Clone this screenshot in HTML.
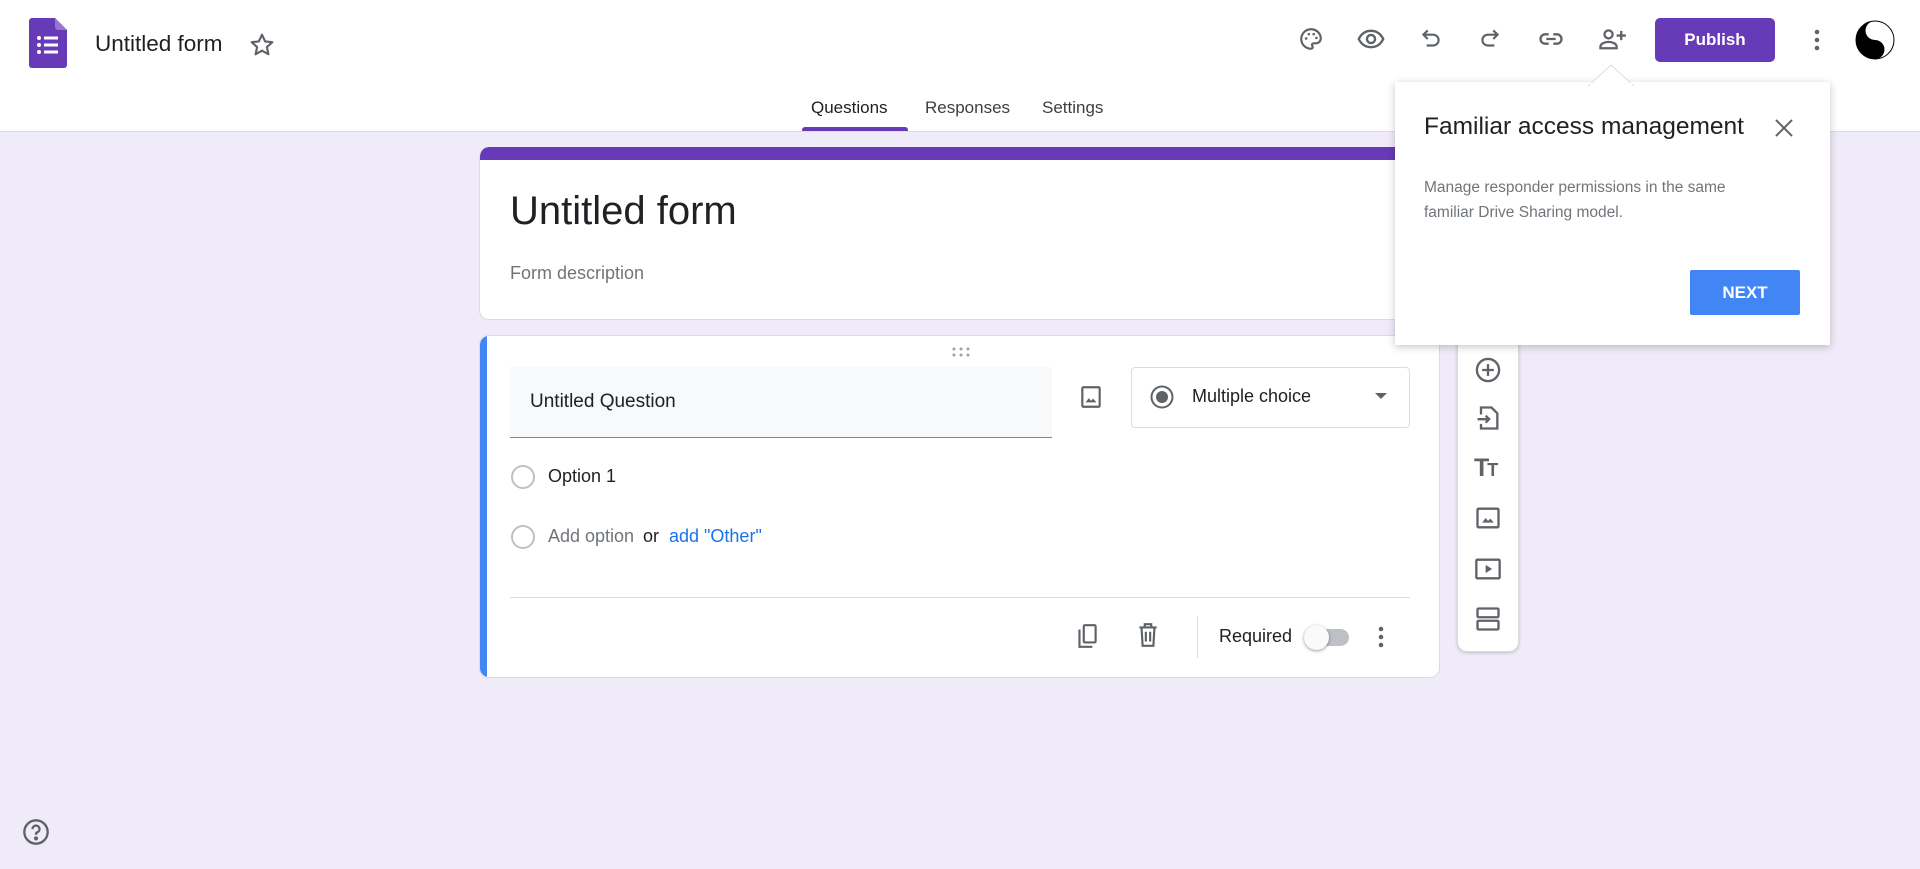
<!DOCTYPE html>
<html><head><meta charset="utf-8"><style>
*{margin:0;padding:0;box-sizing:border-box}
body{width:1920px;height:869px;overflow:hidden;background:#f0ebf8;font-family:"Liberation Sans",Arial,sans-serif;position:relative;color:#202124}
.abs{position:absolute}
svg.i{position:absolute;fill:none;stroke:#5f6368;stroke-width:2}
#hdr{left:0;top:0;width:1920px;height:132px;background:#fff;border-bottom:1px solid #dadce0}
.tab{position:absolute;top:98px;font-size:17px;color:#3c4043}
.card{position:absolute;background:#fff;border-radius:10px;border:1px solid #dadce0}
</style></head><body>
<div id="hdr" class="abs">
  <svg class="abs" style="left:29px;top:18px" width="38" height="50" viewBox="0 0 38 50">
    <path d="M3 0h23l12 12v35a3 3 0 0 1-3 3H3a3 3 0 0 1-3-3V3a3 3 0 0 1 3-3z" fill="#673ab7"/>
    <path d="M26 0l12 12H29a3 3 0 0 1-3-3z" fill="#9575cd"/>
    <g fill="#fff"><circle cx="10" cy="20" r="2"/><circle cx="10" cy="27" r="2"/><circle cx="10" cy="34" r="2"/>
    <rect x="15" y="18.5" width="14" height="3"/><rect x="15" y="25.5" width="14" height="3"/><rect x="15" y="32.5" width="14" height="3"/></g>
  </svg>
  <div class="abs" style="left:95px;top:31px;font-size:22.5px;color:#202124">Untitled form</div>
  <svg class="i" style="left:249px;top:32px" width="26" height="26" viewBox="0 0 24 24" stroke-width="1.6"><path d="M12 2.5l2.9 6.2 6.6.7-5 4.5 1.4 6.6L12 17.2l-5.9 3.3 1.4-6.6-5-4.5 6.6-.7z" stroke-linejoin="round"/></svg>

  <div class="tab" style="left:811px;color:#202124">Questions</div>
  <div class="abs" style="left:802px;top:127px;width:106px;height:4px;background:#673ab7;border-radius:3px 3px 0 0"></div>
  <div class="tab" style="left:925px">Responses</div>
  <div class="tab" style="left:1042px">Settings</div>

  <svg class="i" style="left:1298px;top:26px" width="26" height="26" viewBox="0 0 24 24"><path d="M12 3a9 9 0 0 0 0 18c1 0 1.6-.7 1.6-1.5 0-.9-.7-1.2-.7-2 0-.8.7-1.5 1.5-1.5h2.1A4.5 4.5 0 0 0 21 11.5C21 6.8 17 3 12 3z"/><circle cx="7.5" cy="11.5" r="1.2" fill="#5f6368" stroke="none"/><circle cx="10" cy="7.5" r="1.2" fill="#5f6368" stroke="none"/><circle cx="14.5" cy="7.5" r="1.2" fill="#5f6368" stroke="none"/><circle cx="17" cy="11" r="1.2" fill="#5f6368" stroke="none"/></svg>
  <svg class="i" style="left:1357px;top:25px" width="28" height="28" viewBox="0 0 24 24"><path d="M1.5 12C4 7 8 5 12 5s8 2 10.5 7C20 17 16 19 12 19S4 17 1.5 12z"/><circle cx="12" cy="12" r="3.5"/></svg>
  <svg class="i" style="left:1418px;top:26px" width="26" height="26" viewBox="0 0 24 24"><path d="M9 4L5 8l4 4M5 8h9a5 5 0 0 1 0 10H8"/></svg>
  <svg class="i" style="left:1477px;top:26px" width="26" height="26" viewBox="0 0 24 24"><path d="M15 4l4 4-4 4M19 8h-9a5 5 0 0 0 0 10h6"/></svg>
  <svg class="i" style="left:1537px;top:25px" width="28" height="28" viewBox="0 0 24 24"><path d="M10 8H7a4 4 0 0 0 0 8h3M14 8h3a4 4 0 0 1 0 8h-3M8 12h8"/></svg>
  <svg class="i" style="left:1597px;top:25px" width="30" height="28" viewBox="0 0 26 24"><circle cx="10" cy="8" r="3.5"/><path d="M3 20v-1.5c0-2.5 4-4 7-4s7 1.5 7 4V20z"/><path d="M21 5v8M17 9h8"/></svg>

  <div class="abs" style="left:1655px;top:18px;width:120px;height:44px;background:#673ab7;border-radius:5px;color:#fff;font-size:17px;font-weight:bold;text-align:center;line-height:44px">Publish</div>
  <svg class="abs" style="left:1810px;top:27px" width="14" height="26" viewBox="0 0 14 26"><g fill="#5f6368"><circle cx="7" cy="5" r="2.3"/><circle cx="7" cy="13" r="2.3"/><circle cx="7" cy="21" r="2.3"/></g></svg>
  <svg class="abs" style="left:1855px;top:20px" width="40" height="40" viewBox="-20 -20 40 40">
    <circle r="19" fill="#fff" stroke="#000" stroke-width="1"/>
    <path d="M0-19A19 19 0 0 0 0 19A9.5 9.5 0 0 0 0 0A9.5 9.5 0 0 1 0-19z" fill="#000"/>
    <circle cy="-9.5" r="3" fill="#fff"/><circle cy="9.5" r="3" fill="#000"/>
  </svg>
</div>

<div class="card" style="left:479px;top:147px;width:961px;height:173px;overflow:hidden;border-top:none">
  <div style="height:13px;background:#673ab7"></div>
  <div class="abs" style="left:30px;top:42px;font-size:40px;color:#202124">Untitled form</div>
  <div class="abs" style="left:30px;top:116px;font-size:18px;color:#70757a">Form description</div>
</div>

<div class="card" style="left:479px;top:335px;width:961px;height:343px;overflow:hidden">
  <div class="abs" style="left:0;top:0;width:7px;height:343px;background:#4285f4"></div>
  <svg class="abs" style="left:471px;top:10px" width="20" height="12"><g fill="#9aa0a6"><circle cx="3" cy="3" r="1.5"/><circle cx="10" cy="3" r="1.5"/><circle cx="17" cy="3" r="1.5"/><circle cx="3" cy="9" r="1.5"/><circle cx="10" cy="9" r="1.5"/><circle cx="17" cy="9" r="1.5"/></g></svg>
  <div class="abs" style="left:30px;top:31px;width:542px;height:71px;background:#f8f9fa;border-bottom:1px solid #80868b"></div>
  <div class="abs" style="left:50px;top:55px;font-size:19px;color:#202124">Untitled Question</div>
  <svg class="i" style="left:598px;top:48px" width="26" height="26" viewBox="0 0 24 24"><rect x="4" y="3" width="16" height="18" rx="1"/><path d="M7 17l3-4 2 2.5 2-2 3 3.5z" fill="#5f6368" stroke="none"/></svg>
  <div class="abs" style="left:651px;top:31px;width:279px;height:61px;border:1px solid #dadce0;border-radius:4px"></div>
  <svg class="abs" style="left:669px;top:48px" width="26" height="26" viewBox="0 0 26 26"><circle cx="13" cy="13" r="10.5" fill="none" stroke="#5f6368" stroke-width="2"/><circle cx="13" cy="13" r="6" fill="#5f6368"/></svg>
  <div class="abs" style="left:712px;top:50px;font-size:18px;color:#202124">Multiple choice</div>
  <svg class="abs" style="left:895px;top:56px" width="12" height="8"><path d="M0 1h12L6 7z" fill="#5f6368"/></svg>

  <svg class="abs" style="left:30px;top:128px" width="26" height="26"><circle cx="13" cy="13" r="11" fill="none" stroke="#bdc1c6" stroke-width="2"/></svg>
  <div class="abs" style="left:68px;top:130px;font-size:18px;color:#202124">Option 1</div>
  <svg class="abs" style="left:30px;top:188px" width="26" height="26"><circle cx="13" cy="13" r="11" fill="none" stroke="#bdc1c6" stroke-width="2"/></svg>
  <div class="abs" style="left:68px;top:190px;font-size:18px;color:#70757a">Add option</div>
  <div class="abs" style="left:163px;top:190px;font-size:18px;color:#202124">or</div>
  <div class="abs" style="left:189px;top:190px;font-size:18px;color:#1a73e8">add "Other"</div>

  <div class="abs" style="left:30px;top:261px;width:900px;height:1px;background:#dadce0"></div>
  <svg class="i" style="left:594px;top:286px" width="26" height="28" viewBox="0 0 24 26"><path d="M5 7v16h12"/><rect x="9" y="3" width="11" height="16" rx="1"/></svg>
  <svg class="i" style="left:655px;top:285px" width="26" height="28" viewBox="0 0 24 26"><path d="M4 6h16M9 6V3h6v3M6 6l1 17h10l1-17M10 10v9M14 10v9"/></svg>
  <div class="abs" style="left:717px;top:280px;width:1px;height:42px;background:#dadce0"></div>
  <div class="abs" style="left:739px;top:290px;font-size:18px;color:#202124">Required</div>
  <div class="abs" style="left:826px;top:293px;width:43px;height:17px;border-radius:9px;background:#bdc1c6"></div>
  <div class="abs" style="left:824px;top:289px;width:25px;height:25px;border-radius:50%;background:#fafafa;box-shadow:0 1px 3px rgba(0,0,0,.4)"></div>
  <svg class="abs" style="left:894px;top:288px" width="14" height="26"><g fill="#5f6368"><circle cx="7" cy="5" r="2.3"/><circle cx="7" cy="13" r="2.3"/><circle cx="7" cy="21" r="2.3"/></g></svg>
</div>

<div class="card" style="left:1457px;top:335px;width:62px;height:317px;box-shadow:0 1px 3px rgba(0,0,0,.2)"></div>
<svg class="i" style="left:1474px;top:356px" width="28" height="28" viewBox="0 0 24 24"><circle cx="12" cy="12" r="9.5"/><path d="M12 7v10M7 12h10"/></svg>
<svg class="i" style="left:1474px;top:404px" width="28" height="28" viewBox="0 0 24 24"><path d="M6 9V3h9l5 5v13H6v-4"/><path d="M3 13h10M10 10l3 3-3 3"/></svg>
<div class="abs" style="left:1474px;top:454px;font-size:25px;font-weight:bold;color:#5f6368;letter-spacing:-2px">T<span style="font-size:18px">T</span></div>
<svg class="i" style="left:1474px;top:504px" width="28" height="28" viewBox="0 0 24 24"><rect x="3" y="4" width="18" height="16" rx="1"/><path d="M7 16l3-4 2 2.5 2-2 3 3.5z" fill="#5f6368" stroke="none"/></svg>
<svg class="i" style="left:1474px;top:555px" width="28" height="28" viewBox="0 0 24 24"><rect x="2" y="4" width="20" height="16" rx="1"/><path d="M10 8.5v7l5.5-3.5z" fill="#5f6368" stroke="none"/></svg>
<svg class="i" style="left:1474px;top:605px" width="28" height="28" viewBox="0 0 24 24"><rect x="3" y="3" width="18" height="7.5" rx="1"/><rect x="3" y="13.5" width="18" height="7.5" rx="1"/></svg>

<svg class="abs" style="left:1588px;top:64px;z-index:3" width="46" height="22"><path d="M0 22L23 1l23 21" fill="#fff" stroke="#dadce0"/></svg>
<div class="abs" style="left:1395px;top:82px;width:435px;height:263px;background:#fff;box-shadow:0 2px 8px rgba(0,0,0,.22);z-index:2">
  <div class="abs" style="left:29px;top:31px;font-size:24.5px;color:#202124">Familiar access management</div>
  <svg class="abs" style="left:378px;top:35px" width="22" height="22"><path d="M3 3l16 16M19 3L3 19" stroke="#5f6368" stroke-width="2"/></svg>
  <div class="abs" style="left:29px;top:93px;font-size:15.5px;line-height:25px;color:#70757a;width:340px">Manage responder permissions in the same familiar Drive Sharing model.</div>
  <div class="abs" style="left:295px;top:188px;width:110px;height:45px;background:#4285f4;border-radius:2px;color:#fff;font-size:17px;font-weight:bold;text-align:center;line-height:45px">NEXT</div>
</div>
<div class="abs" style="left:1590px;top:83px;width:42px;height:3px;background:#fff;z-index:4"></div>

<svg class="i" style="left:22px;top:818px" width="28" height="28" viewBox="0 0 24 24" stroke="#9aa0a6"><circle cx="12" cy="12" r="10"/><path d="M9 9.5a3 3 0 1 1 4 2.8c-.8.4-1 1-1 1.7v.5"/><circle cx="12" cy="17.5" r=".8" fill="#9aa0a6"/></svg>
</body></html>
